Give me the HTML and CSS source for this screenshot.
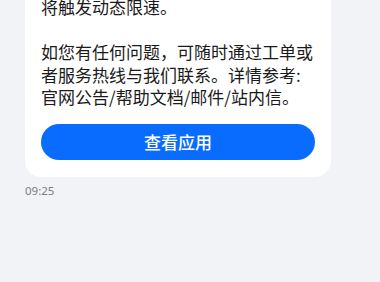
FILE: index.html
```html
<!DOCTYPE html>
<html lang="zh-CN">
<head>
<meta charset="utf-8">
<link rel="stylesheet" href="styles.css">
</head>
<body>
<div class="chat">
  <div class="card">
    <p class="msg">将触发动态限速。</p>
    <p class="msg gap">如您有任何问题，可随时通过工单或者服务热线与我们联系。详情参考:官网公告/帮助文档/邮件/站内信。</p>
    <button class="btn">查看应用</button>
  </div>
  <div class="time">09:25</div>
</div>
</body>
</html>
```
FILE: styles.css
```css
html, body {
  margin: 0;
  padding: 0;
  background: #f1f3f6;
  height: 100%;
}
body {
  font-family: "Noto Sans CJK SC", "Noto Sans", sans-serif;
  overflow: hidden;
}
.chat {
  padding-left: 25px;
}
.card {
  width: 274px;
  margin-top: -20px;
  padding: 16px 16px 17px;
  background: #ffffff;
  border-radius: 16px;
  display: flex;
  flex-direction: column;
}
.msg {
  margin: 0;
  font-size: 17px;
  line-height: 22.6px;
  color: #1a1a1a;
}
.gap {
  margin-top: 22.6px;
}
.btn {
  margin-top: 15px;
  height: 36px;
  border: none;
  border-radius: 18px;
  background: #0a6cff;
  color: #ffffff;
  font-family: "Noto Sans CJK SC", sans-serif;
  font-size: 17px;
  font-weight: 500;
  padding: 0;
}
.time {
  margin-top: 6px;
  font-family: "Noto Sans", sans-serif;
  font-size: 11.5px;
  line-height: 15px;
  color: #7d7d7d;
}
```
